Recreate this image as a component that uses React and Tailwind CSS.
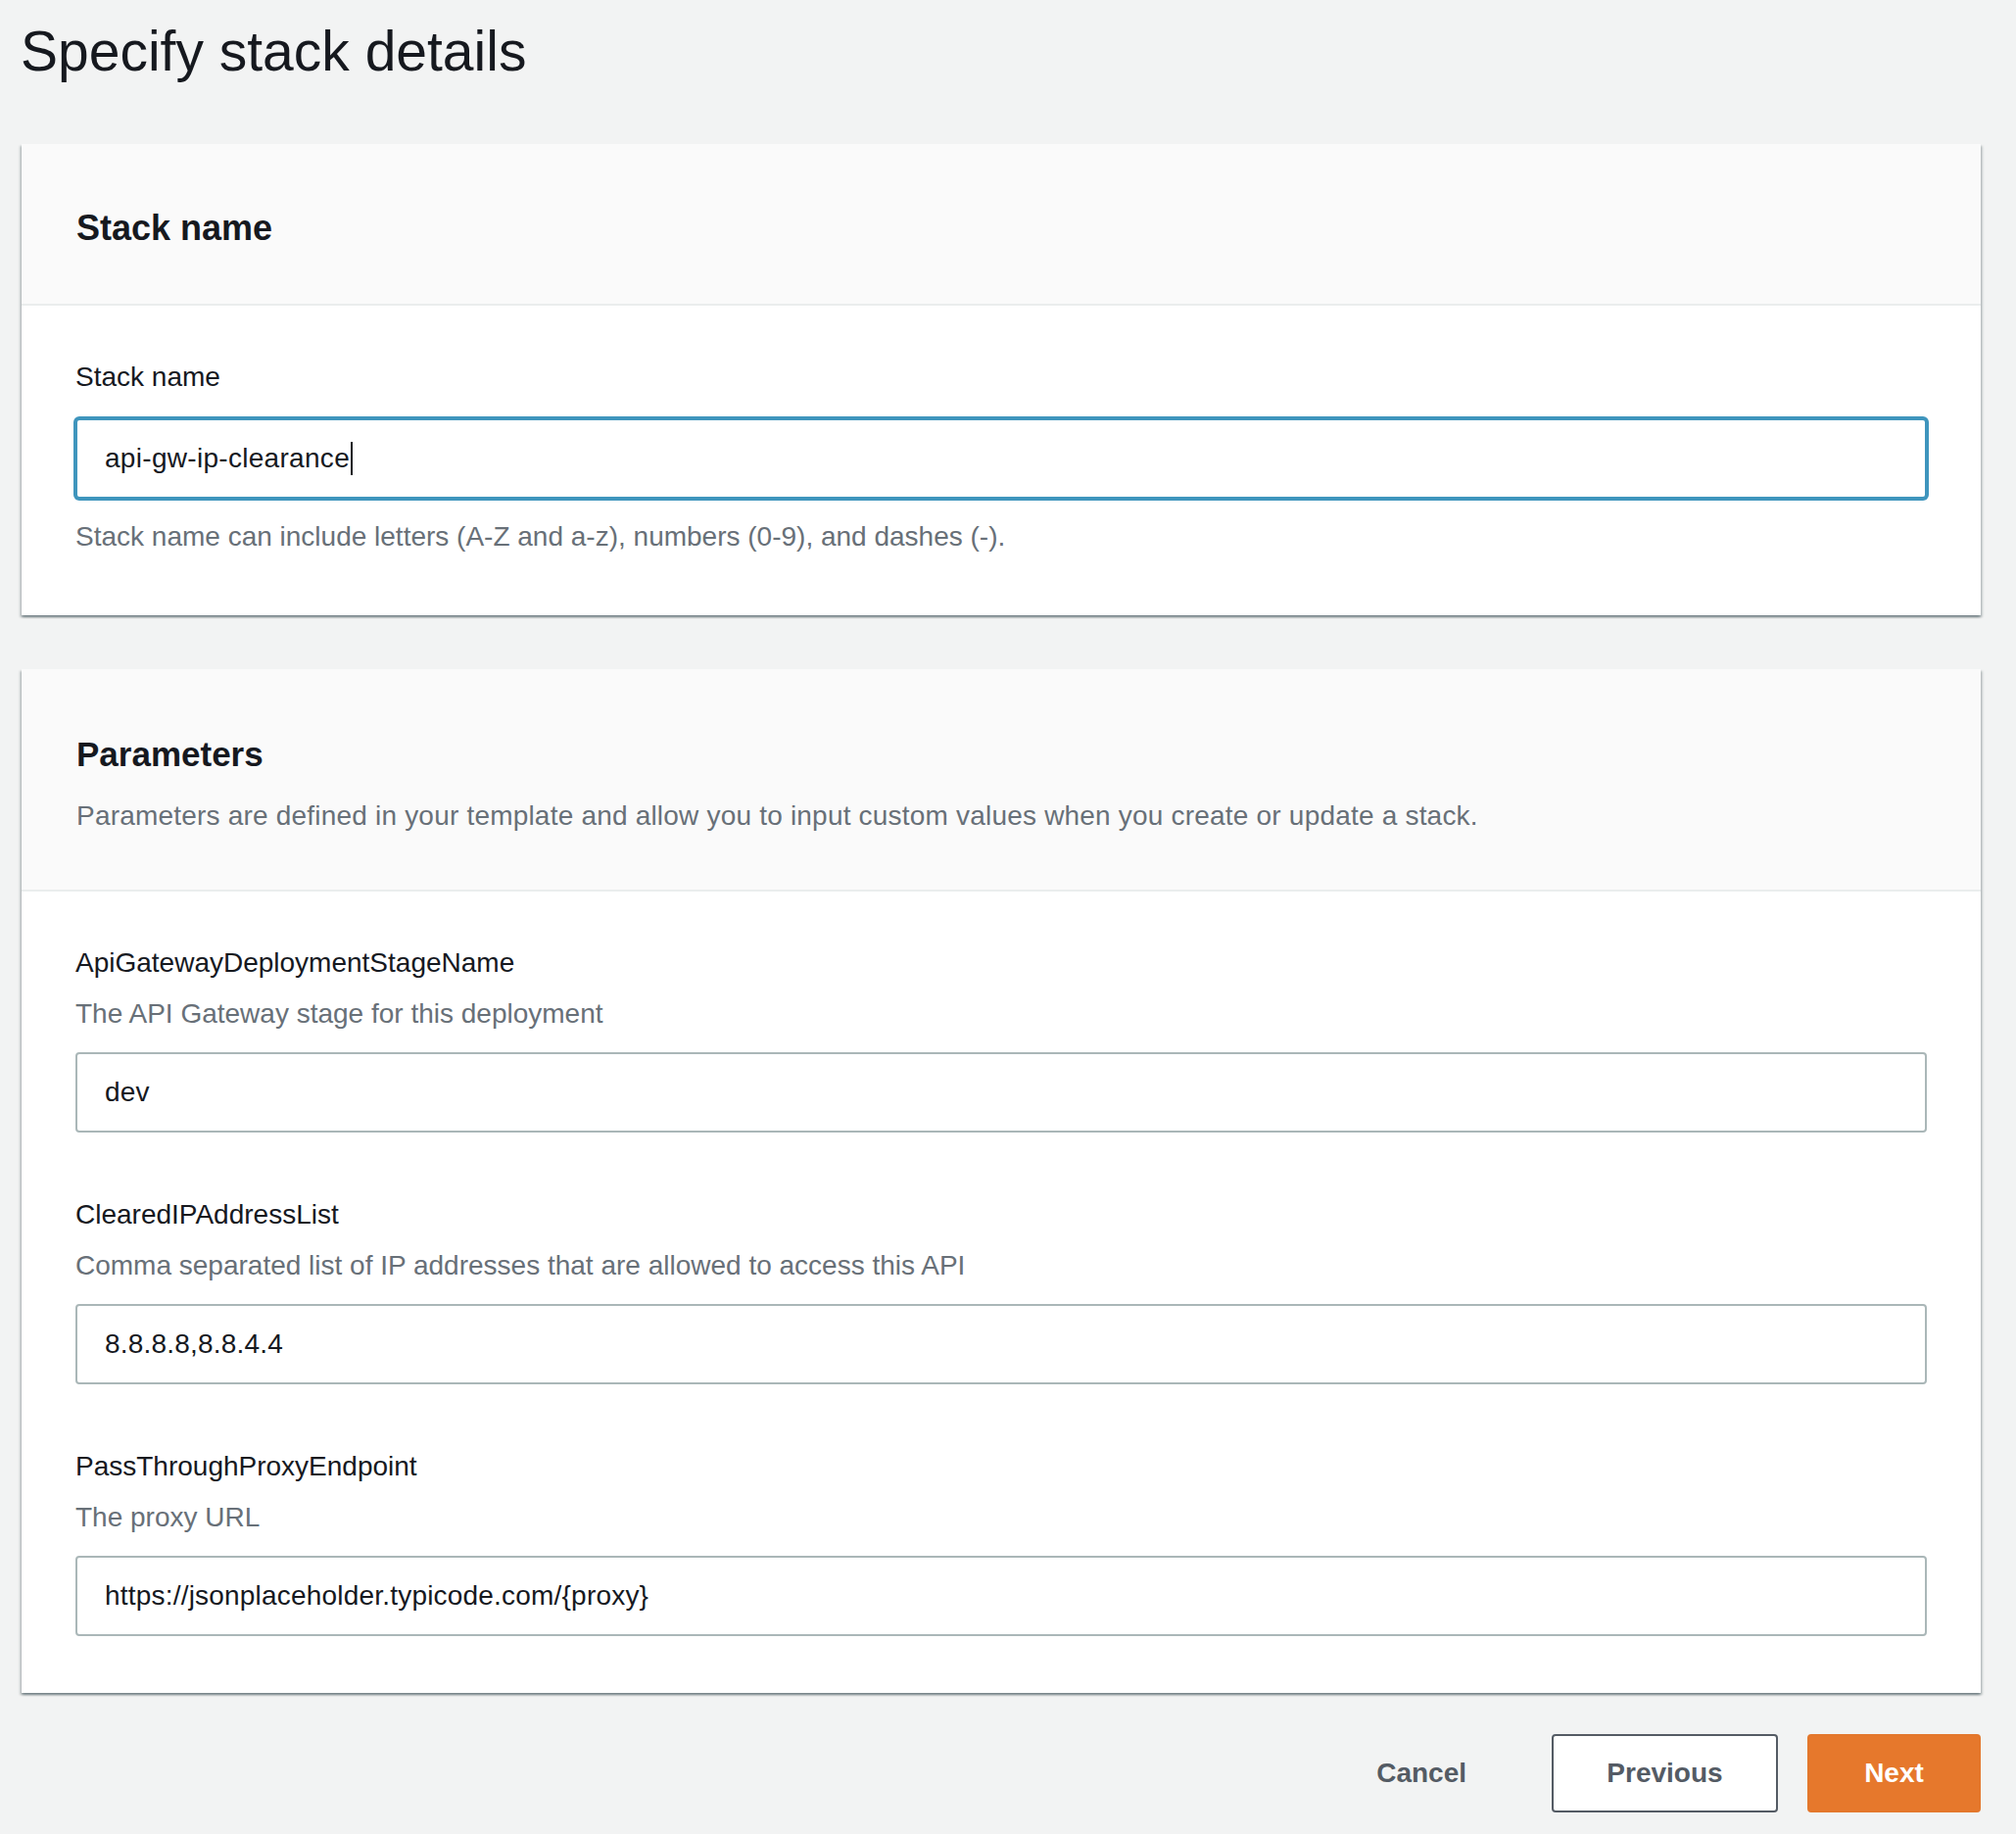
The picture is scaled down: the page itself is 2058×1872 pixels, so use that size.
import React from "react";

function Field({ label, desc, value }) {
  return (
    <div className="flex flex-col">
      <div className="text-[28px] leading-[40px] text-[#16191f]">{label}</div>
      <div className="mt-[12px] text-[28px] leading-[40px] text-[#687078]">{desc}</div>
      <input
        readOnly
        value={value}
        className="mt-[19px] h-[82px] w-full rounded-[4px] border-2 border-[#aab7b8] bg-white pl-[28px] text-[28px] tracking-[0.2px] text-[#16191f] outline-none"
      />
    </div>
  );
}

const cardShadow =
  "shadow-[0_2px_2px_0_rgba(0,28,36,0.32),2px_2px_2px_0_rgba(0,28,36,0.16),-2px_2px_2px_0_rgba(0,28,36,0.16)]";

export default function App() {
  return (
    <div className="min-h-screen bg-[#f2f3f3] pl-[22px] pr-[36px] pb-[20px] font-['Liberation_Sans',Arial,sans-serif] text-[#16191f]">
      <h1 className="-ml-[1px] pt-[20px] text-[57px] font-normal leading-[64px] text-[#16191f]">Specify stack details</h1>

      {/* Stack name card */}
      <section className={`mt-[63px] bg-white ${cardShadow}`}>
        <div className="border-b-2 border-[#eaeded] bg-[#fafafa] px-[56px] pt-[62px] pb-[53px]">
          <h2 className="text-[36px] font-bold leading-[48px]">Stack name</h2>
        </div>
        <div className="px-[55px] pt-[53px] pb-[60px]">
          <div className="text-[28px] leading-[40px]">Stack name</div>
          <div className="mt-[22px] flex h-[82px] w-full items-center rounded-[4px] border-2 border-[#3f95bd] bg-white pl-[28px] text-[28px] tracking-[0.3px] shadow-[0_0_0_2px_#3f95bd]">
            <span>api-gw-ip-clearance</span>
            <span className="ml-[1px] inline-block h-[34px] w-[2px] bg-[#16191f]" />
          </div>
          <div className="mt-[19px] text-[28px] leading-[40px] text-[#687078]">
            Stack name can include letters (A-Z and a-z), numbers (0-9), and dashes (-).
          </div>
        </div>
      </section>

      {/* Parameters card */}
      <section className={`mt-[55px] bg-white ${cardShadow}`}>
        <div className="border-b-2 border-[#eaeded] bg-[#fafafa] px-[56px] pt-[63px] pb-[55px]">
          <h2 className="text-[35px] font-bold leading-[48px]">Parameters</h2>
          <p className="mt-[19px] text-[28px] leading-[40px] tracking-[0.2px] text-[#687078]">
            Parameters are defined in your template and allow you to input custom values when you create or update a stack.
          </p>
        </div>
        <div className="flex flex-col gap-[64px] px-[55px] pt-[53px] pb-[58px]">
          <Field
            label="ApiGatewayDeploymentStageName"
            desc="The API Gateway stage for this deployment"
            value="dev"
          />
          <Field
            label="ClearedIPAddressList"
            desc="Comma separated list of IP addresses that are allowed to access this API"
            value="8.8.8.8,8.8.4.4"
          />
          <Field
            label="PassThroughProxyEndpoint"
            desc="The proxy URL"
            value="https://jsonplaceholder.typicode.com/{proxy}"
          />
        </div>
      </section>

      {/* Actions */}
      <div className="mt-[42px] flex items-center justify-end">
        <button className="mr-[47px] h-[80px] px-[40px] text-[28px] font-bold text-[#545b64]">Cancel</button>
        <button className="mr-[30px] h-[80px] w-[231px] rounded-[4px] border-2 border-[#545b64] bg-white text-[28px] font-bold text-[#545b64]">
          Previous
        </button>
        <button className="h-[80px] w-[177px] rounded-[4px] border-2 border-[#e3772c] bg-[#e6782c] text-[28px] font-bold text-white">
          Next
        </button>
      </div>
    </div>
  );
}
